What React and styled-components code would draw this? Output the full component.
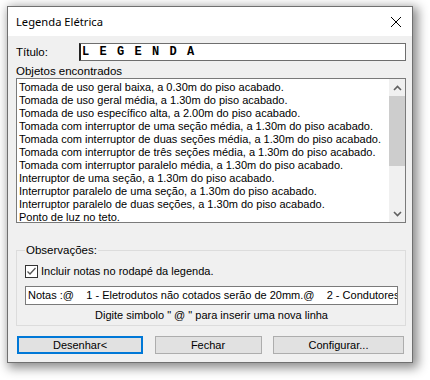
import React from "react";
import styled, { createGlobalStyle } from "styled-components";

const Global = createGlobalStyle`
  html, body { margin: 0; padding: 0; background: #ffffff; }
  body { font-family: "Liberation Sans", Arial, sans-serif; }
`;

const Stage = styled.div`
  width: 430px;
  height: 380px;
  padding: 6px 0 0 7px;
  box-sizing: border-box;
`;

const Window = styled.div`
  width: 406px;
  height: 357px;
  box-sizing: border-box;
  border: 1px solid #707070;
  background: #f0f0f0;
  display: flex;
  flex-direction: column;
  box-shadow: 3px 3px 10px 2px rgba(0, 0, 0, 0.45);
`;

const TitleBar = styled.div`
  height: 29px;
  background: #ffffff;
  display: flex;
  align-items: center;
  justify-content: space-between;
  padding: 0 8px 0 8px;
  font-family: "Noto Sans", "Open Sans", sans-serif;
  font-size: 11.2px;
  color: #000;
`;

const Close = styled.svg`
  width: 12px;
  height: 12px;
  margin-right: 2px;
`;

const Body = styled.div`
  flex: 1;
  min-width: 0;
  display: flex;
  flex-direction: column;
  padding: 7px 6px 0 8px;
  font-size: 11px;
  color: #000;
`;

const Row = styled.div`
  display: flex;
  align-items: center;
  height: 18px;
`;

const Label = styled.span`
  font-size: 11.5px;
  width: 63px;
`;

const TitleInput = styled.div`
  flex: 1;
  height: 18px;
  box-sizing: border-box;
  border: 1px solid #6e6e6e;
  border-left: 2px solid #222;
  background: #fff;
  font-family: "Liberation Mono", monospace;
  font-weight: bold;
  font-size: 12px;
  letter-spacing: 1.55px;
  padding-left: 1px;
  line-height: 16px;
  white-space: pre;
`;

const SectionLabel = styled.div`
  font-size: 11.5px;
  margin-top: 4px;
  height: 13px;
  line-height: 13px;
`;

const ListBox = styled.div`
  height: 145px;
  box-sizing: border-box;
  border: 1px solid #7a7a7a;
  background: #fff;
  display: flex;
`;

const Items = styled.div`
  flex: 1;
  min-width: 0;
  padding: 2px 0 0 2px;
  overflow: hidden;
`;

const Item = styled.div`
  height: 13px;
  line-height: 13px;
  font-size: 11px;
  white-space: nowrap;
`;

const ScrollBar = styled.div`
  width: 16px;
  background: #f0f0f0;
  display: flex;
  flex-direction: column;
`;

const Arrow = styled.div`
  height: 17px;
  display: flex;
  align-items: center;
  justify-content: center;
`;

const Thumb = styled.div`
  height: 70px;
  background: #cdcdcd;
`;

const Track = styled.div`
  flex: 1;
`;

const Group = styled.fieldset`
  margin: 21px 0 0 0;
  min-width: 0;
  padding: 8px 7px 0 8px;
  border: 1px solid #dcdcdc;
  height: 82px;
  box-sizing: border-box;
  display: flex;
  flex-direction: column;
`;

const Legend = styled.legend`
  font-size: 11.5px;
  padding: 0 1px;
`;

const CheckRow = styled.label`
  display: flex;
  align-items: center;
  gap: 3px;
  font-size: 11px;
  height: 14px;
`;

const Box = styled.span`
  width: 13px;
  height: 13px;
  box-sizing: border-box;
  border: 1px solid #333;
  background: #fff;
  display: flex;
  align-items: center;
  justify-content: center;
`;

const NotesInput = styled.div`
  margin-top: 8px;
  height: 19px;
  min-width: 0;
  box-sizing: border-box;
  border: 1px solid #7a7a7a;
  background: #fff;
  font-size: 11px;
  line-height: 17px;
  padding-left: 2px;
  white-space: pre;
  overflow: hidden;
`;

const Hint = styled.div`
  text-align: center;
  font-size: 11px;
  margin-top: 4px;
`;

const Buttons = styled.div`
  display: flex;
  justify-content: space-between;
  margin-top: 10px;
  padding-left: 1px;
  padding-right: 2px;
`;

const Button = styled.button`
  width: ${(p) => p.w}px;
  height: 18px;
  box-sizing: border-box;
  background: #e1e1e1;
  border: ${(p) => (p.primary ? "2px solid #0078d7" : "1px solid #adadad")};
  font-family: "Liberation Sans", Arial, sans-serif;
  font-size: 11px;
  color: #000;
  padding: 0;
  line-height: 14px;
`;

const items = [
  "Tomada de uso geral baixa, a 0.30m do piso acabado.",
  "Tomada de uso geral média, a 1.30m do piso acabado.",
  "Tomada de uso específico alta, a 2.00m do piso acabado.",
  "Tomada com interruptor de uma seção média, a 1.30m do piso acabado.",
  "Tomada com interruptor de duas seções média, a 1.30m do piso acabado.",
  "Tomada com interruptor de três seções média, a 1.30m do piso acabado.",
  "Tomada com interruptor paralelo média, a 1.30m do piso acabado.",
  "Interruptor de uma seção, a 1.30m do piso acabado.",
  "Interruptor paralelo de uma seção, a 1.30m do piso acabado.",
  "Interruptor paralelo de duas seções, a 1.30m do piso acabado.",
  "Ponto de luz no teto.",
];

const Chevron = ({ up }) => (
  <svg width="9" height="6" viewBox="0 0 9 6">
    <path
      d={up ? "M1 5 L4.5 1.5 L8 5" : "M1 1 L4.5 4.5 L8 1"}
      fill="none"
      stroke="#606060"
      strokeWidth="1.6"
    />
  </svg>
);

export default function App() {
  return (
    <Stage>
      <Global />
      <Window>
        <TitleBar>
          <span>Legenda Elétrica</span>
          <Close viewBox="0 0 12 12">
            <path d="M1 1 L11 11 M11 1 L1 11" stroke="#000" strokeWidth="1" />
          </Close>
        </TitleBar>
        <Body>
          <Row>
            <Label>Título:</Label>
            <TitleInput>L E G E N D A</TitleInput>
          </Row>
          <SectionLabel>Objetos encontrados</SectionLabel>
          <ListBox>
            <Items>
              {items.map((t) => (
                <Item key={t}>{t}</Item>
              ))}
            </Items>
            <ScrollBar>
              <Arrow>
                <Chevron up />
              </Arrow>
              <Thumb />
              <Track />
              <Arrow>
                <Chevron />
              </Arrow>
            </ScrollBar>
          </ListBox>
          <Group>
            <Legend>Observações:</Legend>
            <CheckRow>
              <Box>
                <svg width="11" height="11" viewBox="0 0 11 11">
                  <path d="M1.5 5.5 L4 8 L9.5 2" fill="none" stroke="#555" strokeWidth="1.3" />
                </svg>
              </Box>
              Incluir notas no rodapé da legenda.
            </CheckRow>
            <NotesInput>
              {"Notas :@    1 - Eletrodutos não cotados serão de 20mm.@    2 - Condutores não cotados serão de 2.5mm²."}
            </NotesInput>
            <Hint>Digite simbolo " @ " para inserir uma nova linha</Hint>
          </Group>
          <Buttons>
            <Button primary w={126}>Desenhar&lt;</Button>
            <Button w={107}>Fechar</Button>
            <Button w={131}>Configurar...</Button>
          </Buttons>
        </Body>
      </Window>
    </Stage>
  );
}
